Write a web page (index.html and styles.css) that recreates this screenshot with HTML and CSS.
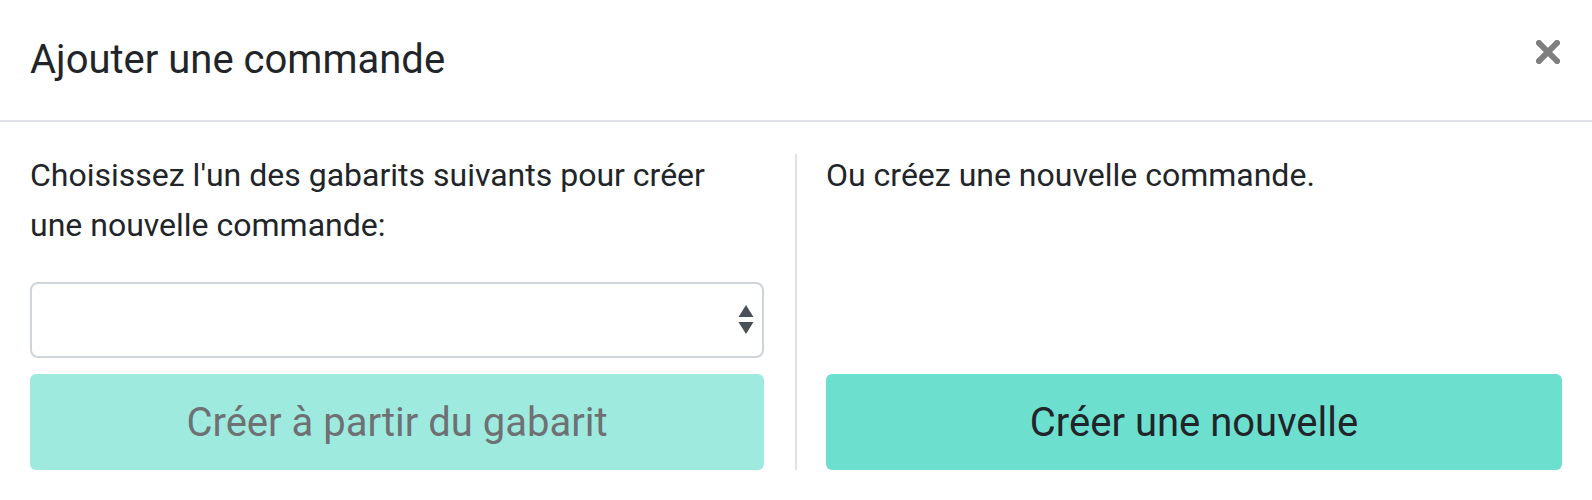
FILE: index.html
```html
<!DOCTYPE html>
<html lang="fr">
<head>
<meta charset="utf-8">
<title>Ajouter une commande</title>
<link rel="stylesheet" href="styles.css">
</head>
<body>
<div class="modal">
  <div class="modal-header">
    <h5 class="modal-title">Ajouter une commande</h5>
    <button class="close" type="button" aria-label="Close">
      <svg class="close-icon" width="24" height="24" viewBox="0 0 24 24"><path d="M3 3 L21 21 M21 3 L3 21" stroke="#7f7f7f" stroke-width="6" stroke-linecap="square"/></svg>
    </button>
  </div>
  <div class="modal-body">
    <div class="col col-left">
      <p class="text">Choisissez l'un des gabarits suivants pour créer une nouvelle commande:</p>
      <div class="select-wrap">
        <select class="select"><option></option></select>
        <svg class="select-arrows" width="16" height="30" viewBox="0 0 16 30"><path d="M8 0 L15.5 12 L0.5 12 Z M0.5 17 L15.5 17 L8 29 Z" fill="#495057"/></svg>
      </div>
      <button class="btn btn-disabled" type="button">Créer à partir du gabarit</button>
    </div>
    <div class="col col-right">
      <p class="text">Ou créez une nouvelle commande.</p>
      <button class="btn btn-primary" type="button">Créer une nouvelle</button>
    </div>
  </div>
</div>
</body>
</html>
```

FILE: styles.css
```css
html, body {
  margin: 0;
  padding: 0;
  background: #ffffff;
}
body {
  font-family: Roboto, "Liberation Sans", Arial, sans-serif;
  color: #212529;
}
.modal {
  width: 1592px;
}
.modal-header {
  height: 120px;
  border-bottom: 2px solid #dee2e6;
  display: flex;
  align-items: center;
  justify-content: space-between;
  padding: 0 32px 0 30px;
  box-sizing: content-box;
}
.modal-title {
  margin: 0;
  font-size: 40px;
  font-weight: 400;
  line-height: 60px;
}
.close {
  align-self: flex-start;
  background: none;
  border: 0;
  padding: 0;
  margin: 40px 0 0 0;
  width: 24px;
  height: 24px;
  display: flex;
}
.modal-body {
  display: grid;
  grid-template-columns: 767px 765px;
  padding: 32px 30px 30px 30px;
}
.col {
  display: flex;
  flex-direction: column;
}
.col-left {
  padding-right: 31px;
  border-right: 2px solid #dee2e6;
}
.col-right {
  padding-left: 29px;
}
.text {
  margin: -4px 0 0 0;
  font-size: 32px;
  line-height: 50px;
}
.select-wrap {
  position: relative;
  margin-top: 32px;
}
.select {
  display: block;
  width: 100%;
  height: 76px;
  box-sizing: border-box;
  border: 2px solid #ced4da;
  border-radius: 8px;
  background: #ffffff;
  appearance: none;
  -webkit-appearance: none;
  font-family: inherit;
  font-size: 32px;
  padding: 0 24px;
}
.select-arrows {
  position: absolute;
  right: 10px;
  top: 23px;
  pointer-events: none;
}
.btn {
  display: block;
  width: 100%;
  height: 96px;
  margin-top: 16px;
  border: 0;
  border-radius: 6px;
  background: #6ddfcf;
  color: #212529;
  font-family: inherit;
  font-size: 40px;
  font-weight: 400;
  padding: 0;
}
.btn-disabled {
  opacity: 0.65;
}
.btn-primary {
  margin-top: auto;
}
```
